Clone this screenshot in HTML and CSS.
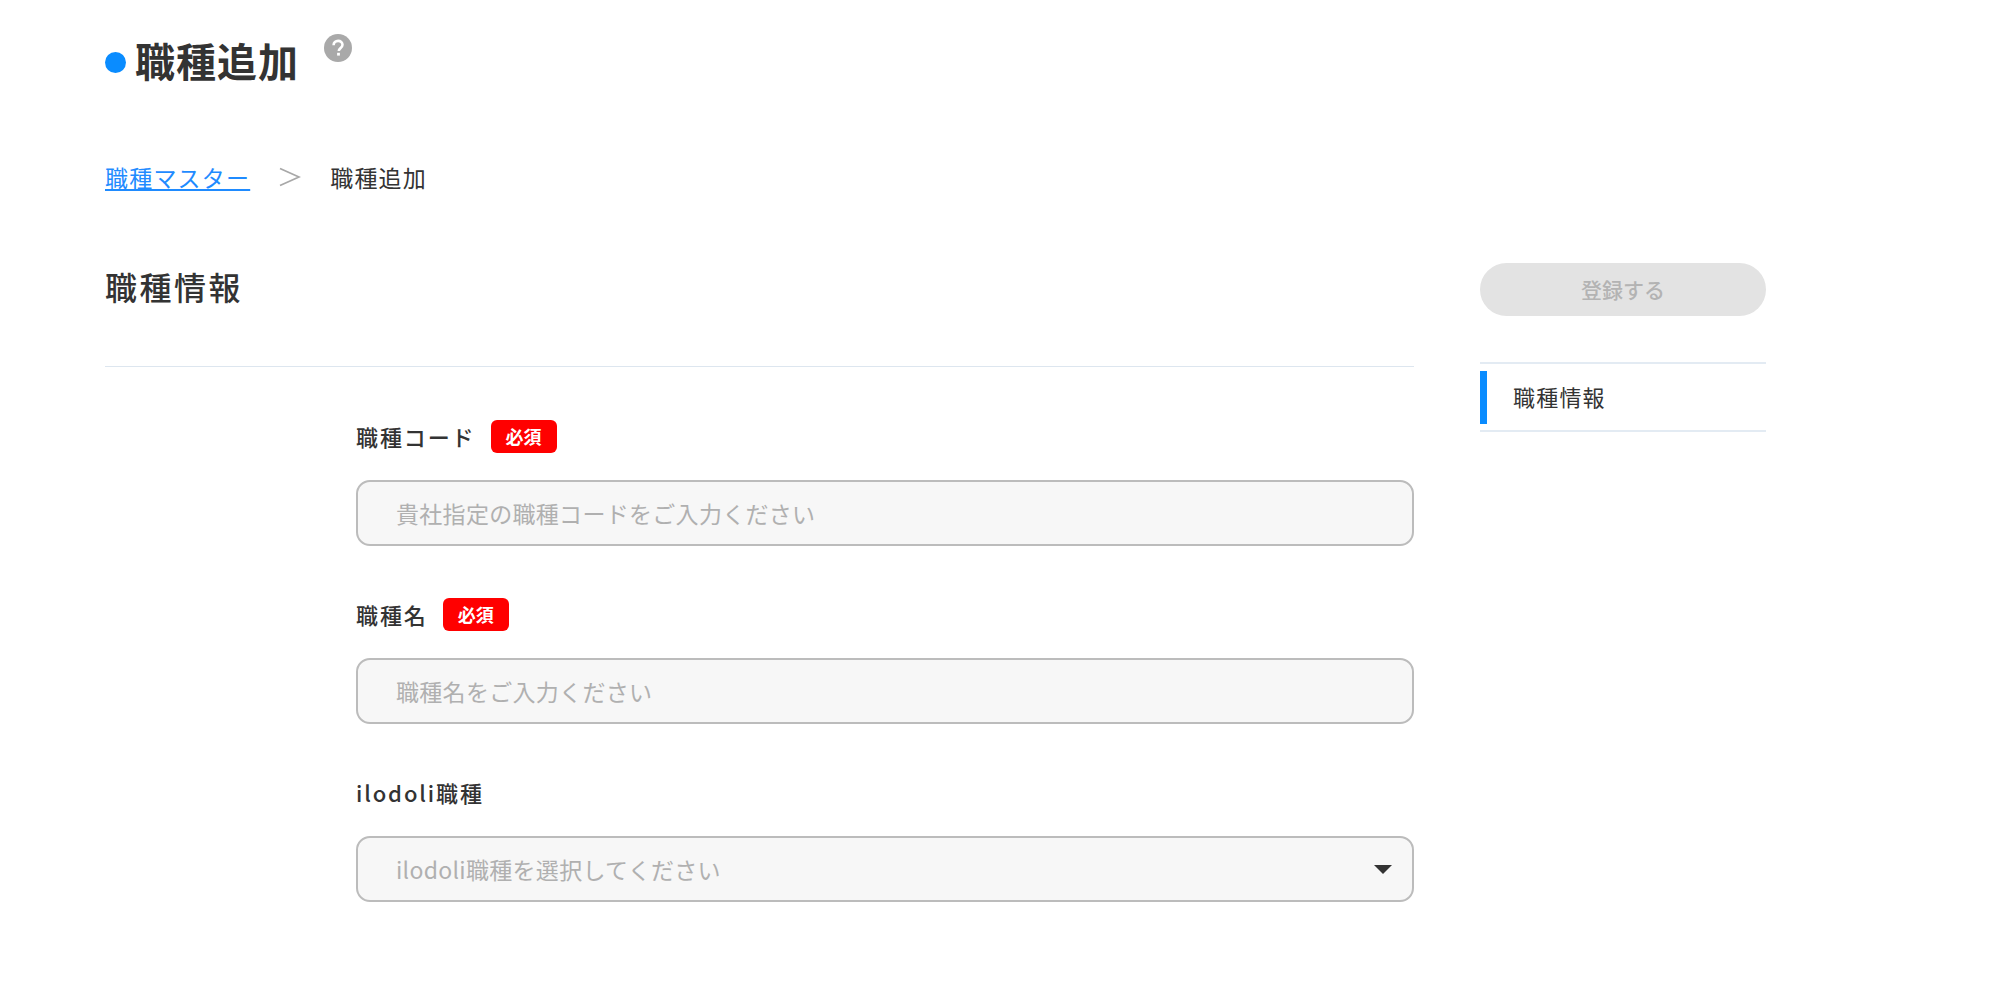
FILE: index.html
```html
<!DOCTYPE html>
<html lang="ja">
<head>
<meta charset="utf-8">
<title>職種追加</title>
<link rel="stylesheet" href="styles.css">
</head>
<body>
<div class="page">
  <header class="title-row">
    <span class="title-dot"></span>
    <h1 class="title">職種追加</h1>
    <svg class="help" viewBox="0 0 28 28" width="28" height="28" aria-hidden="true">
      <circle cx="14" cy="14" r="14" fill="#a9a9a9"/>
      <path d="M9.6 11.2c0-2.6 2-4.3 4.5-4.3s4.4 1.6 4.4 3.9c0 1.8-1 2.7-2.2 3.6-1.1.8-1.5 1.3-1.5 2.6" fill="none" stroke="#fff" stroke-width="2.6"/>
      <rect x="13.1" y="18.8" width="2.8" height="2.8" fill="#fff"/>
    </svg>
  </header>
  <nav class="crumbs">
    <a class="crumb-link" href="#">職種マスター</a>
    <svg class="crumb-sep" viewBox="0 0 22 20" width="22" height="20" aria-hidden="true"><path d="M1 1.5 20 10 1 18.5" fill="none" stroke="#a8a8a8" stroke-width="1.8"/></svg>
    <span class="crumb-current">職種追加</span>
  </nav>
  <div class="columns">
    <main class="form-col">
      <h2 class="section-title">職種情報</h2>
      <form class="form">
        <div class="field">
          <div class="label-row"><label class="label">職種コード</label><span class="badge">必須</span></div>
          <input class="input" placeholder="貴社指定の職種コードをご入力ください">
        </div>
        <div class="field">
          <div class="label-row"><label class="label">職種名</label><span class="badge">必須</span></div>
          <input class="input" placeholder="職種名をご入力ください">
        </div>
        <div class="field">
          <div class="label-row"><label class="label">ilodoli職種</label></div>
          <div class="select">
            <span class="select-text">ilodoli職種を選択してください</span>
            <span class="caret"></span>
          </div>
        </div>
      </form>
    </main>
    <aside class="side-col">
      <button class="submit" type="button" disabled>登録する</button>
      <div class="side-nav"><div class="side-item">職種情報</div></div>
    </aside>
  </div>
</div>
</body>
</html>
```
FILE: styles.css
```css
* { box-sizing: border-box; }
html, body { margin: 0; height: 100%; overflow: hidden; background: #fff; }
body { font-family: "Noto Sans CJK JP", "Noto Sans", sans-serif; color: #333; }
.page { padding: 26px 0 0 105px; width: 1766px; }

.title-row { display: flex; align-items: flex-start; height: 72px; }
.title-dot { width: 21px; height: 21px; border-radius: 50%; background: #0a8cff; margin-top: 26px; }
.title { margin: -2px 0 0 9px; font-size: 40px; line-height: 72px; height: 72px; font-weight: 700; letter-spacing: 1px; color: #333; }
.help { margin: 8px 0 0 25px; }

.crumbs { display: flex; align-items: center; height: 32px; margin-top: 63px; font-size: 23px; letter-spacing: 1.2px; }
.crumb-link { color: #1f8bff; text-decoration: underline; }
.crumb-sep { margin: 0 29px; }
.crumb-current { color: #333; }

.columns { display: flex; gap: 66px; margin-top: 70px; }
.form-col { width: 1309px; }
.side-col { width: 286px; }

.section-title { margin: -2px 0 0; height: 106px; font-size: 32px; line-height: 50px; font-weight: 500; letter-spacing: 2.5px; border-bottom: 1px solid #dde6ef; color: #333; }
.form { margin-left: 251px; padding-top: 49px; }
.field { margin-bottom: 48px; }
.label-row { display: flex; align-items: center; height: 40px; margin-bottom: 24px; }
.label { font-size: 22px; font-weight: 500; letter-spacing: 1.9px; color: #333; }
.badge { margin-left: 15px; width: 66px; height: 33px; border-radius: 6px; background: #f00; color: #fff; font-size: 18px; font-weight: 700; line-height: 33px; text-align: center; }
.input, .select { display: flex; align-items: center; width: 1058px; height: 66px; padding: 0 38px; background: #f7f7f7; border: 2px solid #bcbcbc; border-radius: 14px; font-family: inherit; font-size: 23px; letter-spacing: .3px; color: #b0b0b0; outline: none; }
.input::placeholder { color: #b0b0b0; opacity: 1; }
.select { justify-content: space-between; padding-right: 20px; }
.caret { width: 0; height: 0; border-left: 9px solid transparent; border-right: 9px solid transparent; border-top: 9px solid #333; }

.submit { display: block; width: 286px; height: 53px; border: 0; border-radius: 27px; background: #e3e3e3; color: #b3b3b3; font-family: inherit; font-size: 21px; font-weight: 500; padding: 0 0 2px; }
.side-nav { margin-top: 46px; padding: 7px 0 6px; border-top: 2px solid #e3ebf3; border-bottom: 2px solid #e3ebf3; }
.side-item { height: 53px; line-height: 51px; border-left: 7px solid #0a8cff; padding-left: 26px; font-size: 22px; letter-spacing: 1.2px; color: #333; }
```
